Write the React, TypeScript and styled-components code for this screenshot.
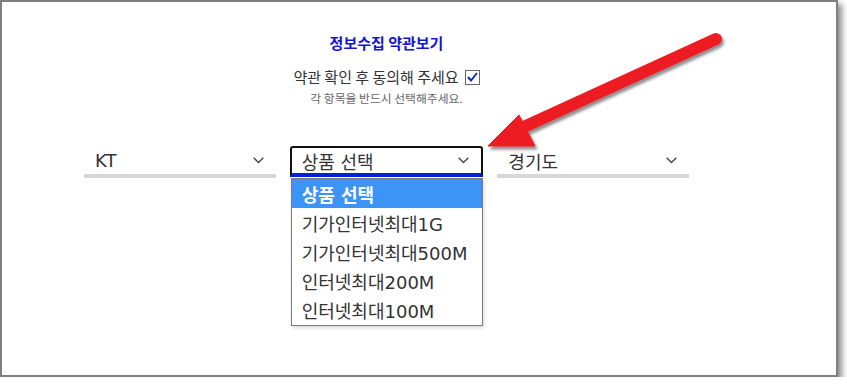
import styled, { createGlobalStyle } from "styled-components";

const GlobalStyle = createGlobalStyle`
    html, body {
        margin: 0;
        padding: 0;
        background: #fff;
    }
    body {
        font-family: "Noto Sans CJK KR", "Noto Sans", sans-serif;
    }
`;

const Frame = styled.div`
    position: relative;
    width: 834px;
    height: 373px;
    border: 2px solid #7f7f7f;
    background: #fff;
    box-shadow: 4px 4px 6px rgba(0, 0, 0, 0.45);
    box-sizing: content-box;
`;

const Content = styled.div`
    width: 605px;
    margin-left: 82px;
    padding-top: 31px;
    display: flex;
    flex-direction: column;
    align-items: center;
`;

const Title = styled.h2`
    margin: 0;
    font-size: 15px;
    line-height: 20px;
    font-weight: 700;
    color: #1414d6;
`;

const AgreeRow = styled.label`
    margin-top: 14px;
    display: flex;
    align-items: center;
    gap: 6px;
    font-size: 15px;
    line-height: 20px;
    color: #333;
`;

const CheckBox = styled.span`
    width: 13px;
    height: 13px;
    border: 1px solid #666;
    background: #fff;
    display: flex;
    align-items: center;
    justify-content: center;
`;

const Notice = styled.p`
    margin: 3px 0 0;
    font-size: 11.8px;
    line-height: 16px;
    color: #666;
`;

const SelectRow = styled.div`
    margin-top: 41px;
    width: 100%;
    display: flex;
    gap: 14px;
    font-family: "DejaVu Sans", "Noto Sans CJK KR", sans-serif;
`;

const SelectWrap = styled.div<{ $wide?: boolean }>`
    position: relative;
    width: ${(p) => (p.$wide ? "194px" : "192px")};
`;

const SelectBox = styled.div<{ $focused?: boolean }>`
    height: ${(p) => (p.$focused ? "25px" : "27px")};
    box-sizing: content-box;
    display: flex;
    align-items: center;
    justify-content: space-between;
    padding: 0 12px 0 ${(p) => (p.$focused ? "10px" : "11px")};
    border-bottom: 4px solid #d7d7d7;
    font-size: 18px;
    color: #333;
    ${(p) =>
        p.$focused &&
        `
        margin-top: -1px;
        border: 2px solid #111;
        border-bottom: 4px solid #0a1ed6;
        border-radius: 3px 3px 0 0;
        `}
`;

const Chevron = () => (
    <svg width="11" height="7" viewBox="0 0 11 7">
        <polyline points="0.7,0.7 5.5,5.6 10.3,0.7" fill="none" stroke="#444" strokeWidth="1.4" />
    </svg>
);

const OptionList = styled.ul`
    position: absolute;
    top: 100%;
    left: 1px;
    width: 190px;
    margin: 0;
    padding: 0;
    list-style: none;
    background: #fff;
    border: 1px solid #7a7a7a;
    box-shadow: 1px 2px 4px rgba(0, 0, 0, 0.15);
    z-index: 2;
`;

const OptionItem = styled.li<{ $active?: boolean }>`
    height: 29.2px;
    padding-left: 10px;
    display: flex;
    align-items: center;
    font-size: 18px;
    color: ${(p) => (p.$active ? "#fff" : "#333")};
    background: ${(p) => (p.$active ? "#3b94f6" : "transparent")};
    font-weight: ${(p) => (p.$active ? 600 : 400)};
`;

const ArrowLayer = styled.svg`
    position: absolute;
    left: -2px;
    top: -2px;
    pointer-events: none;
    z-index: 5;
`;

const products = ["상품 선택", "기가인터넷최대1G", "기가인터넷최대500M", "인터넷최대200M", "인터넷최대100M"];

export default function App() {
    return (
        <>
            <GlobalStyle />
            <Frame>
                <Content>
                    <Title>정보수집 약관보기</Title>
                    <AgreeRow>
                        약관 확인 후 동의해 주세요
                        <CheckBox>
                            <svg width="11" height="10" viewBox="0 0 11 10">
                                <polyline points="1,5 4,8.5 10,1" fill="none" stroke="#0a2bc4" strokeWidth="2" />
                            </svg>
                        </CheckBox>
                    </AgreeRow>
                    <Notice>각 항목을 반드시 선택해주세요.</Notice>
                    <SelectRow>
                        <SelectWrap>
                            <SelectBox>
                                KT
                                <Chevron />
                            </SelectBox>
                        </SelectWrap>
                        <SelectWrap $wide>
                            <SelectBox $focused>
                                상품 선택
                                <Chevron />
                            </SelectBox>
                            <OptionList>
                                {products.map((p, i) => (
                                    <OptionItem key={p} $active={i === 0}>
                                        {p}
                                    </OptionItem>
                                ))}
                            </OptionList>
                        </SelectWrap>
                        <SelectWrap>
                            <SelectBox>
                                경기도
                                <Chevron />
                            </SelectBox>
                        </SelectWrap>
                    </SelectRow>
                </Content>
                <ArrowLayer width="847" height="388" viewBox="0 0 847 388">
                    <defs>
                        <filter id="arrowShadow" x="-20%" y="-20%" width="140%" height="140%">
                            <feDropShadow dx="2" dy="3" stdDeviation="1.5" floodColor="#000" floodOpacity="0.45" />
                        </filter>
                    </defs>
                    <g filter="url(#arrowShadow)" fill="#ed1c24" stroke="#ed1c24">
                        <line x1="716" y1="39" x2="515" y2="131" strokeWidth="12" strokeLinecap="round" />
                        <polygon points="488,146 519,115 535,146" strokeWidth="1" strokeLinejoin="round" />
                    </g>
                </ArrowLayer>
            </Frame>
        </>
    );
}
